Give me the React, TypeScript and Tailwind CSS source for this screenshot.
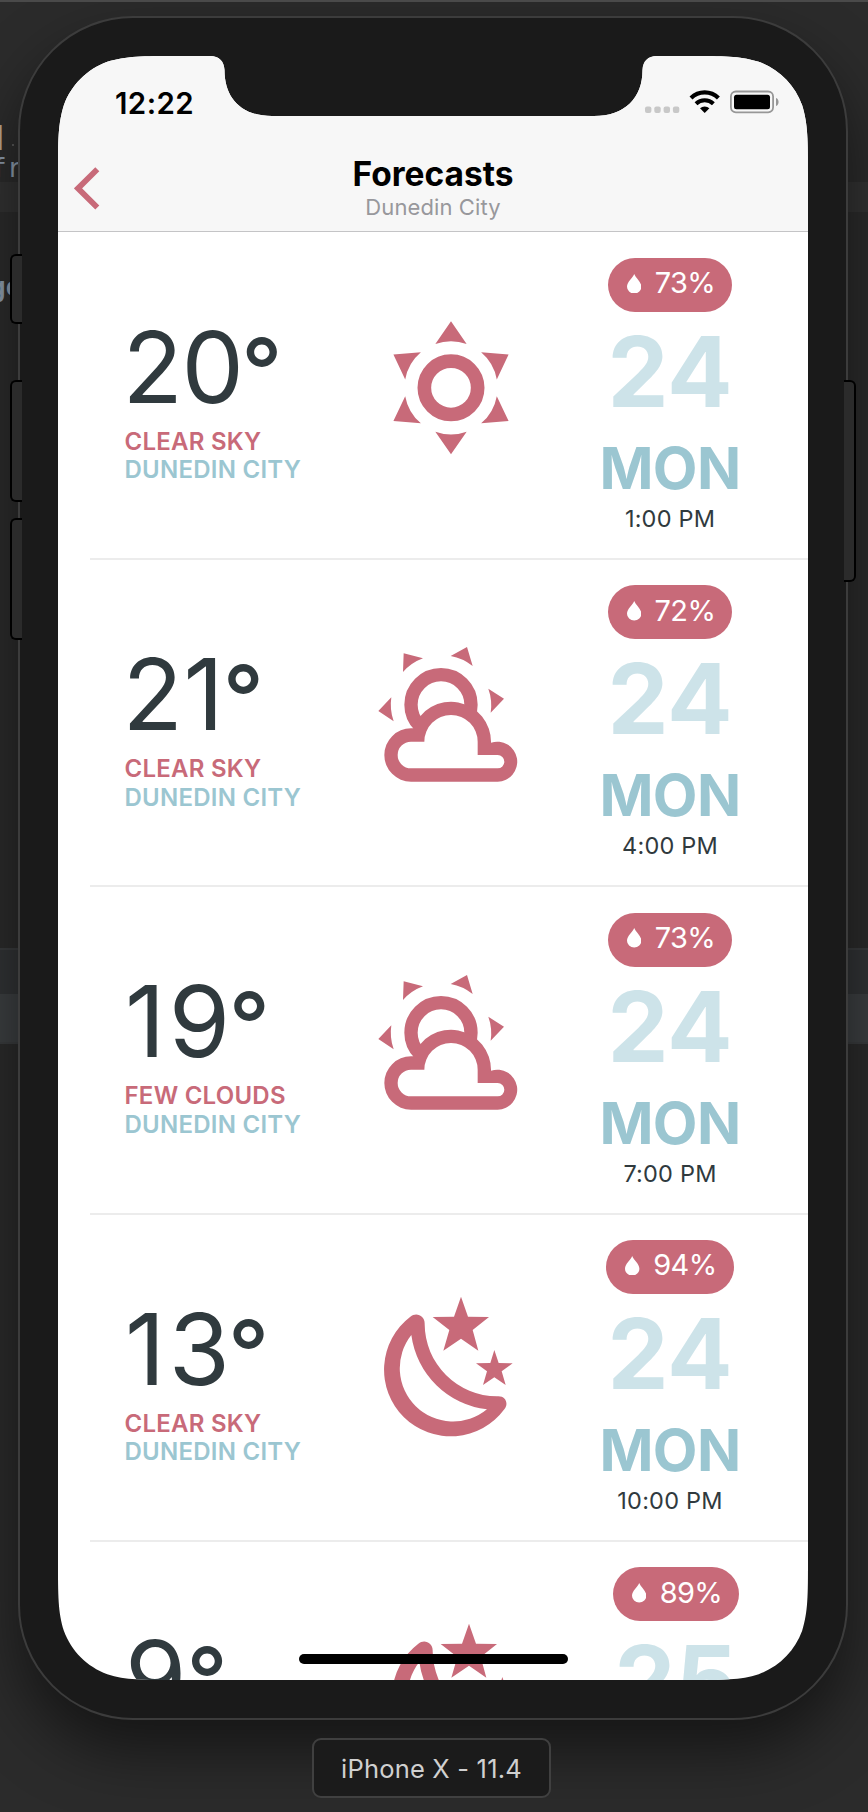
import React from 'react';

type IconKind = 'sun' | 'cloudSun' | 'moon';

interface Forecast {
  temp: string;
  tempClass: string;
  degreeClass: string;
  sky: string;
  icon: IconKind;
  humidity: string;
  date: string;
  day: string;
  time: string;
}

const forecasts: Forecast[] = [
  {
    temp: '20',
    tempClass: '-ml-[1.5px] tracking-[-1.5px]',
    degreeClass: '-ml-px',
    sky: 'Clear sky',
    icon: 'sun',
    humidity: '73%',
    date: '24',
    day: 'Mon',
    time: '1:00 PM',
  },
  {
    temp: '21',
    tempClass: '-ml-[1.5px] tracking-[0.5px]',
    degreeClass: '-ml-[1.5px]',
    sky: 'Clear sky',
    icon: 'cloudSun',
    humidity: '72%',
    date: '24',
    day: 'Mon',
    time: '4:00 PM',
  },
  {
    temp: '19',
    tempClass: 'ml-px tracking-[3.5px]',
    degreeClass: '-ml-[5px]',
    sky: 'Few clouds',
    icon: 'cloudSun',
    humidity: '73%',
    date: '24',
    day: 'Mon',
    time: '7:00 PM',
  },
  {
    temp: '13',
    tempClass: 'ml-px tracking-[3.5px]',
    degreeClass: '-ml-[5.5px]',
    sky: 'Clear sky',
    icon: 'moon',
    humidity: '94%',
    date: '24',
    day: 'Mon',
    time: '10:00 PM',
  },
  {
    temp: '9',
    tempClass: 'ml-px',
    degreeClass: '',
    sky: 'Clear sky',
    icon: 'moon',
    humidity: '89%',
    date: '25',
    day: 'Tue',
    time: '1:00 AM',
  },
];

function SunIcon() {
  return (
    <svg viewBox="62 216 480 480" className="size-[160px] shrink-0 fill-[#c86a79]">
      <circle cx="302" cy="443.500" r="80" fill="none" stroke="#c86a79" strokeWidth="41" />
      {[0, 60, 120, 180, 240, 300].map((angle) => (
        <path
          key={angle}
          d="M302 244L349 312A139 139 0 0 0 255 312Z"
          transform={`rotate(${angle} 302 443.5)`}
        />
      ))}
    </svg>
  );
}

function CloudSunIcon() {
  return (
    <svg viewBox="62 58 480 480" className="size-[160px] shrink-0 fill-[#c86a79]">
      <path d="M160 101L218 116A149 149 0 0 0 158 157Z" />
      <path d="M350 82L367 139A149 149 0 0 0 301 109Z" />
      <path d="M461 237L421 279A149 149 0 0 0 414 207Z" />
      <path d="M84 274L123 233A149 149 0 0 0 130 305Z" />
      <circle cx="272" cy="255" r="90" fill="none" stroke="#c86a79" strokeWidth="40" />
      <path d="M182 486A80 80 0 0 1 182 326H189A120 120 0 0 1 422 369A60 60 0 1 1 442 486Z" />
      <path
        fill="#fff"
        d="M182 446H442A20 20 0 0 0 442 406H382V366A80 80 0 0 0 222 366H182A40 40 0 0 0 182 446Z"
      />
    </svg>
  );
}

function MoonIcon() {
  return (
    <svg viewBox="62 72 480 480" className="size-[160px] shrink-0 fill-[#c86a79]">
      <path
        fillRule="evenodd"
        d="M180 140C198 125 224 137 223 162A218 218 0 0 0 440 379C466 376 476 401 462 418A200 200 0 1 1 180 140ZM183 195A259 259 0 0 0 410 418A160 160 0 0 1 183 195Z"
      />
      <path d="M332 80L353 140L416 141L367 180L384 242L332 206L279 242L297 180L247 141L311 140Z" />
      <path d="M432 240L445 279L487 280L454 304L466 345L432 322L398 345L410 304L377 280L420 279Z" />
    </svg>
  );
}

const icons: Record<IconKind, () => React.JSX.Element> = {
  sun: SunIcon,
  cloudSun: CloudSunIcon,
  moon: MoonIcon,
};

function ForecastRow({ item }: { item: Forecast }) {
  const Icon = icons[item.icon];
  const narrow = item.day !== 'Mon';
  return (
    <li className="ml-8 flex h-[327.33px] shrink-0 border-b-2 border-[#ececec] pr-[68px] pl-[34px] last:border-b-0">
      <div className="w-[178px] pt-[85px] whitespace-nowrap">
        <div className="flex h-[98px] text-[99px] leading-[98px] text-[#303a3e]">
          <span className={item.tempClass}>{item.temp}</span>
          <span className={item.degreeClass}>
            <span className="text-[90px] leading-[91px] font-medium">°</span>
          </span>
        </div>
        <div className="mt-3 ml-[0.5px] text-[24px] leading-[28.7px] font-semibold tracking-[0.25px] uppercase">
          <div className="text-[#c86a79]">{item.sky}</div>
          <div className="text-[#9bc6d1]">Dunedin City</div>
        </div>
      </div>
      <div
        className={
          narrow ? 'flex flex-1 justify-center pt-[79.5px] pl-1' : 'flex flex-1 justify-center pt-[79.5px]'
        }
      >
        <Icon />
      </div>
      <div
        className={
          narrow
            ? 'flex w-[128px] flex-col items-center pt-[25.3px] whitespace-nowrap'
            : 'flex w-[140px] flex-col items-center pt-[25.3px] whitespace-nowrap'
        }
      >
        <div className="flex h-[54px] shrink-0 items-center gap-[13.5px] rounded-full bg-[#c86a79] pr-[17px] pb-[3px] pl-[19px] text-white">
          <svg viewBox="0 0 14.400 19.600" className="h-[19.600px] w-[14.400px] fill-white">
            <path d="M7.200 0C8.600 3.800 14.400 8 14.400 12.700A7.200 6.900 0 0 1 0 12.700C0 8 5.800 3.800 7.200 0Z" />
          </svg>
          <span className="text-[29px] leading-[50px] tracking-[-0.6px]">{item.humidity}</span>
        </div>
        <div className="mt-[11px] text-[97px] leading-[97px] font-bold text-[#cde3e9]">{item.date}</div>
        <div className="mt-[19px] text-[58px] leading-[58px] font-bold tracking-[-0.6px] text-[#9bc6d1] uppercase">
          {item.day}
        </div>
        <div className="mt-2 text-[23.500px] leading-7 tracking-[0.2px] text-[#303a3e]">{item.time}</div>
      </div>
    </li>
  );
}

function StatusIcons() {
  return (
    <svg viewBox="0 0 136 26" className="h-[26px] w-[136px]">
      <g fill="#c8c8c8">
        <rect x="1" y="16.500" width="6.400" height="6.400" rx="2" />
        <rect x="10.300" y="16.500" width="6.400" height="6.400" rx="2" />
        <rect x="19.600" y="16.500" width="6.400" height="6.400" rx="2" />
        <rect x="28.900" y="16.500" width="6.400" height="6.400" rx="2" />
      </g>
      <g fill="none" stroke="#000">
        <path d="M47 8A19.500 19.500 0 0 1 74.400 8" strokeWidth="4.200" />
        <path d="M52 13.800A12.500 12.500 0 0 1 69.400 13.800" strokeWidth="4" />
      </g>
      <path d="M60.700 23L56 18.300A6.800 6.800 0 0 1 65.400 18.300Z" />
      <rect x="86.900" y="1.500" width="42.200" height="20.800" rx="5" fill="none" stroke="#979797" strokeWidth="1.800" />
      <rect x="90" y="4.700" width="36" height="14.500" rx="2.500" />
      <path d="M132 8C135.400 9 135.400 15 132 16Z" fill="#979797" />
    </svg>
  );
}

function Screen() {
  return (
    <div className="relative flex h-[1624px] w-[750px] flex-col overflow-hidden bg-white [clip-path:path('M119.24_0H152C161_0_166_5_166.5_14C166.5_42_183_60_214_60H536C567_60_584.5_42_584.5_14C585_5_590_0_599_0H630.76C665.1_0_682.26_0_697.75_5.11L700.74_5.84C720.92_13.19_736.81_29.08_744.16_49.26C750_67.74_750_84.9_750_119.24V1504.76C750_1539.1_750_1556.26_744.16_1574.74C736.81_1594.92_720.92_1610.81_700.74_1618.16C682.26_1624_665.1_1624_630.76_1624H119.24C84.9_1624_67.74_1624_49.26_1618.16C29.08_1610.81_13.19_1594.92_5.84_1574.74C0_1556.26_0_1539.1_0_1504.76V119.24C0_84.9_0_67.74_5.84_49.26C13.19_29.08_29.08_13.19_49.26_5.84C67.74_0_84.9_0_119.24_0Z')]">
      <header className="flex h-44 shrink-0 flex-col border-b border-[#c4c4c6] bg-[#f7f7f7]">
        <div className="flex h-[88px] items-start justify-between pt-[34px] pr-7 pl-[57px]">
          <span className="mt-[-5px] text-[29.500px] leading-9 font-semibold tracking-[0.4px]">12:22</span>
          <StatusIcons />
        </div>
        <div className="grid grid-cols-[1fr_auto_1fr]">
          <svg viewBox="0 0 30 46" className="mt-[21px] ml-4 h-[46px] w-[30px]">
            <path d="M23.300 4.300L4 23.400L23.300 42.500" fill="none" stroke="#c86a79" strokeWidth="5.700" />
          </svg>
          <div className="pt-2.5 text-center whitespace-nowrap">
            <h1 className="text-[33.500px] leading-10 font-bold">Forecasts</h1>
            <p className="text-[22px] leading-[26px] tracking-[0.1px] text-[#98989c]">Dunedin City</p>
          </div>
        </div>
      </header>
      <ul className="flex min-h-0 flex-1 flex-col pt-[0.67px]">
        {forecasts.map((item, index) => (
          <ForecastRow key={index} item={item} />
        ))}
      </ul>
      <div className="absolute bottom-4 left-[241px] h-2.5 w-[269px] rounded-full bg-black" />
    </div>
  );
}

export default function App() {
  return (
    <div className="relative flex h-[1812px] w-[868px] flex-col items-center overflow-hidden border-t-2 border-[#4a4a4a] bg-[#2b2b2b] pr-0.5 font-['Inter','Liberation_Sans',sans-serif]">
      <div className="absolute top-[180px] left-0 h-[30px] w-full bg-[#323232]" />
      <div className="absolute top-[946px] left-0 h-12 w-full border-t-2 border-[#393b3d] bg-[#313335]" />
      <div className="absolute top-[992px] left-0 h-[50px] w-full border-b-2 border-[#393b3d] bg-[#3c3f41]" />
      <div className="absolute top-[120px] left-[-9px] font-['DejaVu_Sans_Mono',monospace] text-[28px] leading-[32px] text-[#b9a58b]">
        ]
      </div>
      <div className="absolute top-[142px] left-3 size-0.5 bg-[#555]" />
      <div className="absolute top-[151px] left-[-9px] font-['DejaVu_Sans_Mono',monospace] text-[26px] leading-[30px] text-[#8b9aab]">
        fr
      </div>
      <div className="absolute top-[270px] left-[-10px] font-['DejaVu_Sans_Mono',monospace] text-[26px] leading-[30px] font-bold text-[#8b9aab]">
        ge
      </div>

      <div className="relative mt-3.5 h-[1704px] w-[830px] shrink-0 rounded-[115px] border-2 border-[#3c3c3c] bg-[#1a1a1a] p-[38px] shadow-[0_30px_60px_0_rgba(0,0,0,0.5)]">
        <div className="absolute top-[236px] left-[-10px] h-[70px] w-3 rounded-l-md border-2 border-r-0 border-black bg-[#2b2b2b]" />
        <div className="absolute top-[362px] left-[-10px] h-[122px] w-3 rounded-l-md border-2 border-r-0 border-black bg-[#2b2b2b]" />
        <div className="absolute top-[500px] left-[-10px] h-[122px] w-3 rounded-l-md border-2 border-r-0 border-black bg-[#2b2b2b]" />
        <div className="absolute top-[362px] right-[-10px] h-[202px] w-3 rounded-r-md border-2 border-l-0 border-black bg-[#2b2b2b]" />
        <Screen />
      </div>

      <div className="relative -left-[1.5px] mt-[18px] flex h-[60px] w-[239px] shrink-0 items-center justify-center rounded-[9px] border-2 border-[#404040] bg-[#1b1b1b] pt-[3px] text-[25.500px] tracking-[0.200px] text-[#d0d0d0]">
        iPhone X - 11.4
      </div>
    </div>
  );
}
